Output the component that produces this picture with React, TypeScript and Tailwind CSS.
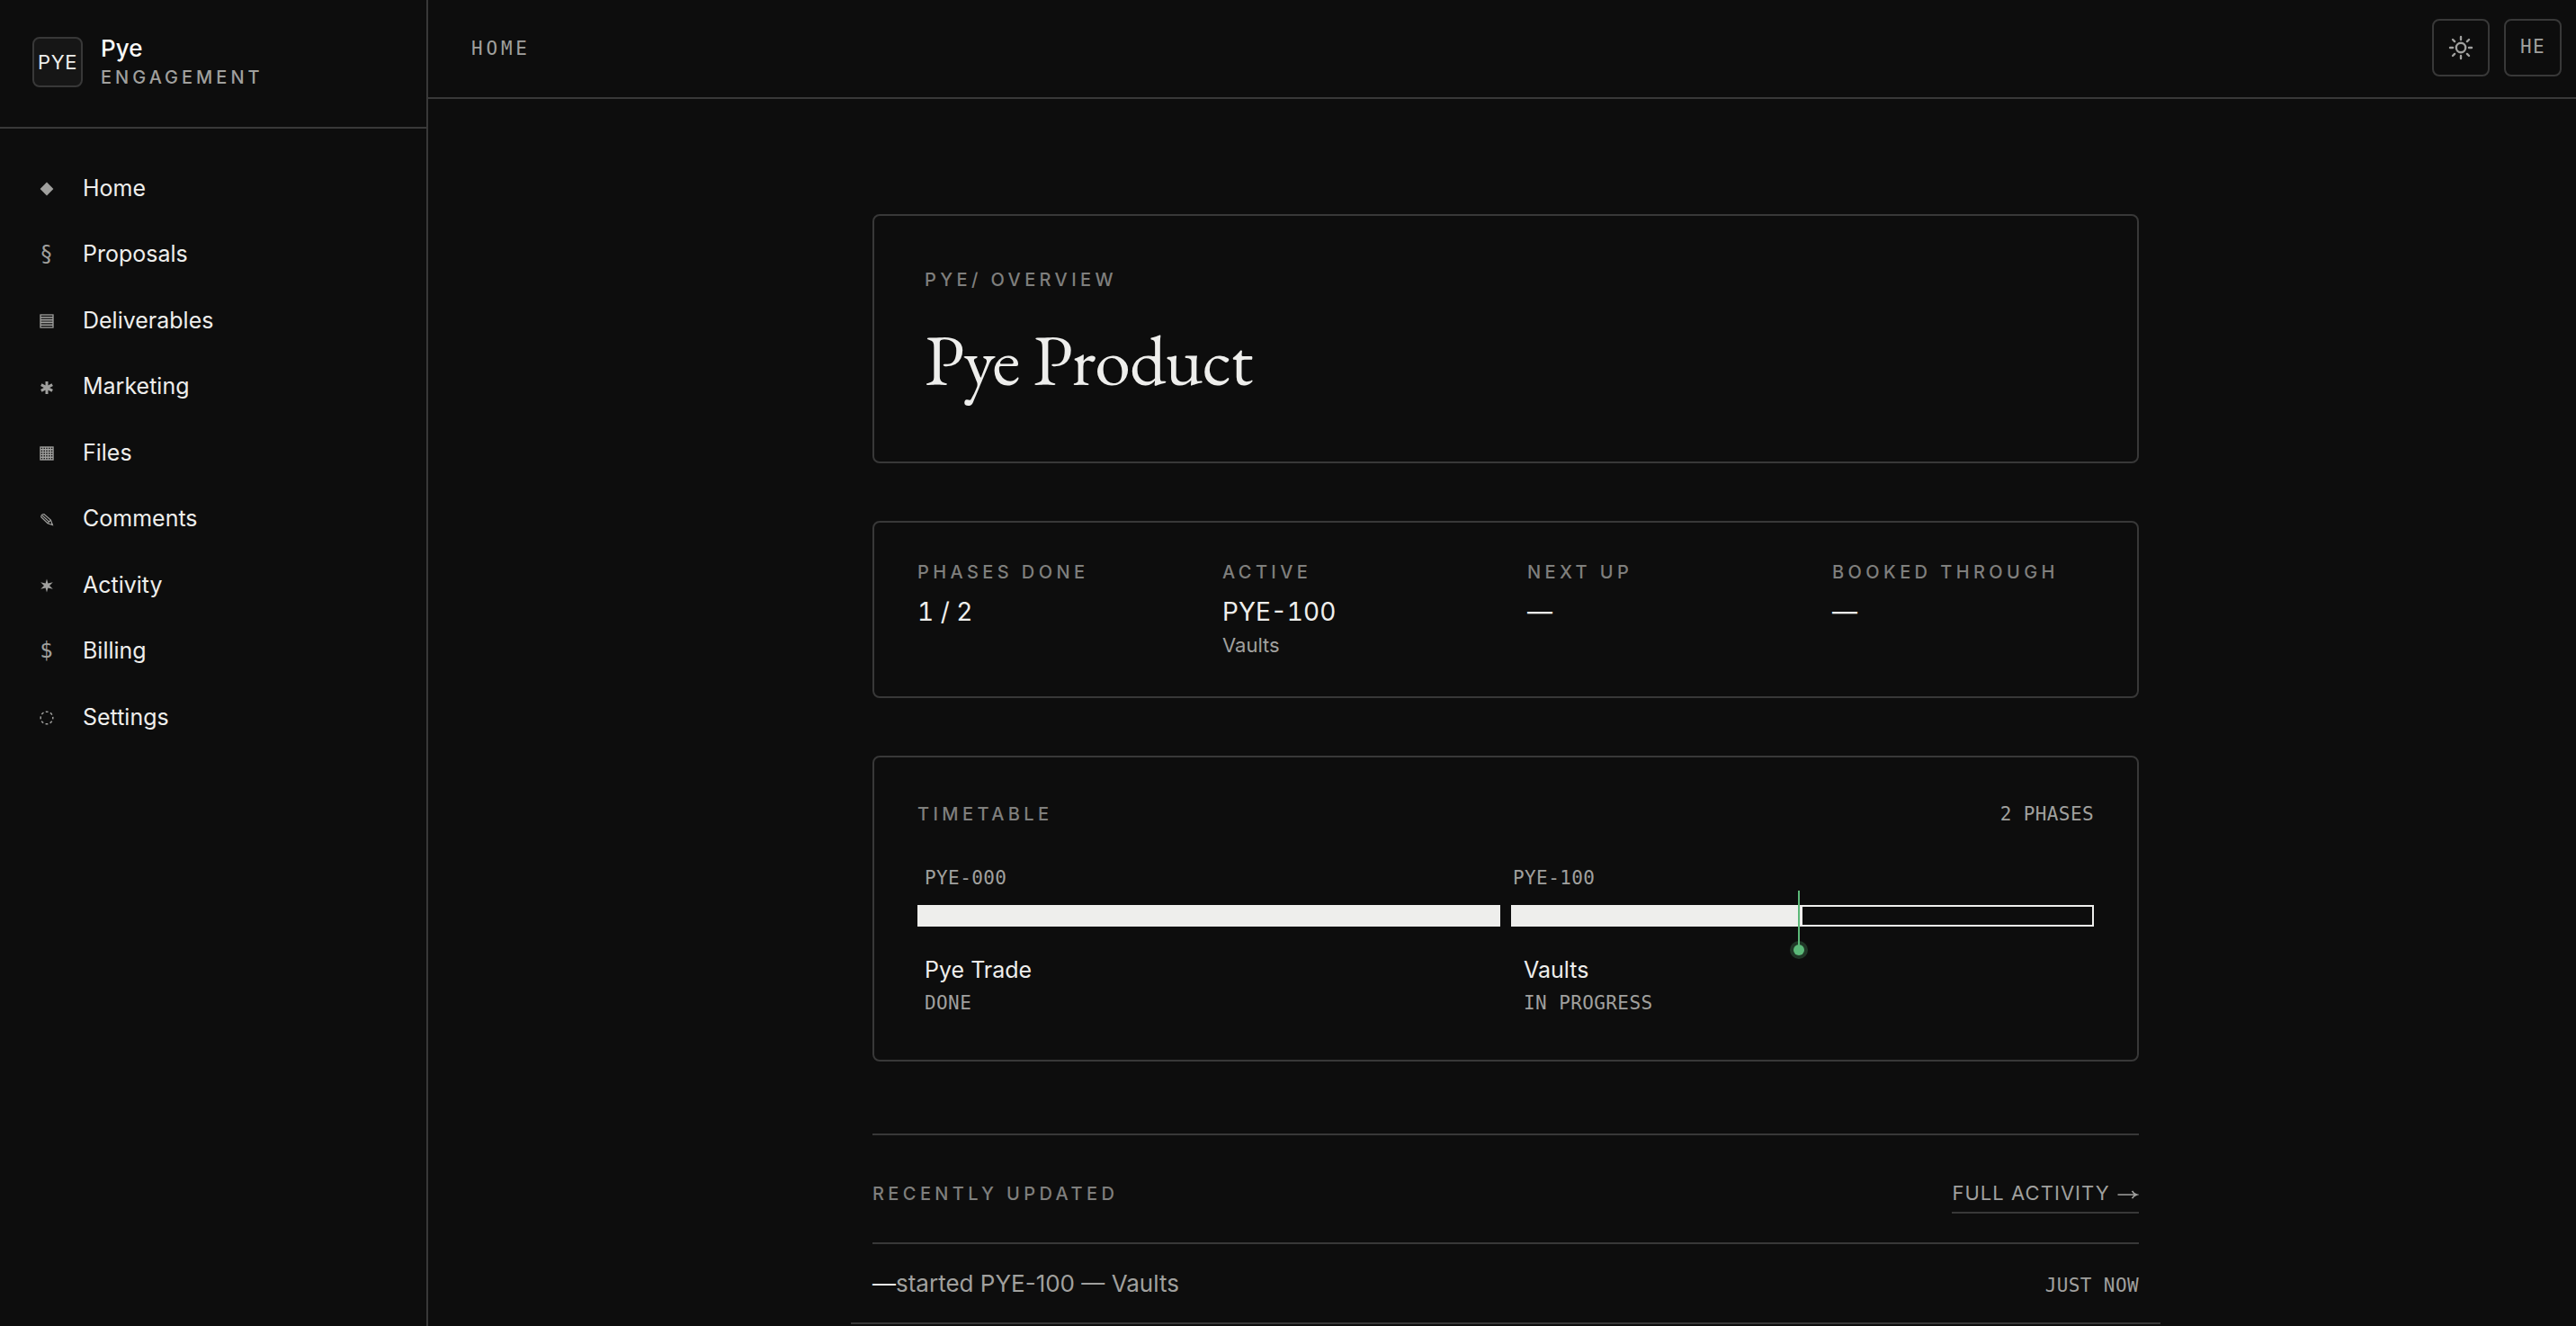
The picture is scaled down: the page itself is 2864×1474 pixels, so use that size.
import React from 'react';

interface NavItem {
  label: string;
  icon: React.ReactNode;
}

interface Stat {
  label: string;
  value: string;
  note?: string;
}

interface Phase {
  code: string;
  name: string;
  status: string;
  progress: number;
}

const Glyph: React.FC<{ children: React.ReactNode }> = ({ children }) => (
  <svg width="16" height="16" viewBox="0 0 16 16" fill="none" stroke="currentColor" className="mt-0.5">
    {children}
  </svg>
);

const navItems: NavItem[] = [
  { label: 'Home', icon: <Glyph><path d="M8 .6 15.4 8 8 15.4.6 8Z" fill="currentColor" stroke="none" /></Glyph> },
  { label: 'Proposals', icon: '§' },
  {
    label: 'Deliverables',
    icon: (
      <Glyph>
        <rect x="1" y="1" width="14" height="14" strokeWidth="1.3" />
        <path d="M1 3.8h14M1 6.6h14M1 9.4h14M1 12.2h14" strokeWidth="1.6" />
      </Glyph>
    ),
  },
  {
    label: 'Marketing',
    icon: (
      <Glyph>
        <path d="M8 1v14M1.8 4.6l12.4 6.8M1.8 11.4l12.4-6.8" strokeWidth="3" />
      </Glyph>
    ),
  },
  {
    label: 'Files',
    icon: (
      <Glyph>
        <rect x="1" y="1" width="14" height="14" strokeWidth="1.4" />
        <path d="M1 3.8h14M1 6.6h14M1 9.4h14M1 12.2h14M3.8 1v14M6.6 1v14M9.4 1v14M12.2 1v14" strokeWidth="1.4" />
      </Glyph>
    ),
  },
  {
    label: 'Comments',
    icon: (
      <Glyph>
        <path d="M1.8 4.700Q1.600 1.500 5 1.500L12.400 8.100 14.400 13.500 9 11.700ZM12.400 8.100 9 11.700M3.200 3.100l7.400 7" strokeWidth="1.2" />
      </Glyph>
    ),
  },
  {
    label: 'Activity',
    icon: (
      <Glyph>
        <path
          d="M8 .5 9.4 5.6 14.8 4.2 11 8 14.8 11.8 9.4 10.4 8 15.5 6.6 10.4 1.2 11.8 5 8 1.2 4.2 6.6 5.6Z"
          fill="currentColor"
          stroke="none"
        />
      </Glyph>
    ),
  },
  { label: 'Billing', icon: '$' },
  {
    label: 'Settings',
    icon: (
      <Glyph>
        <circle cx="8" cy="8" r="6.8" strokeWidth="1.5" strokeDasharray="2.9 2.44" strokeDashoffset="1.45" />
      </Glyph>
    ),
  },
];

const stats: Stat[] = [
  { label: 'Phases done', value: '1 / 2' },
  { label: 'Active', value: 'PYE-100', note: 'Vaults' },
  { label: 'Next up', value: '—' },
  { label: 'Booked through', value: '—' },
];

const phases: Phase[] = [
  { code: 'PYE-000', name: 'Pye Trade', status: 'Done', progress: 100 },
  { code: 'PYE-100', name: 'Vaults', status: 'In progress', progress: 50 },
];

const mono = "font-['DejaVu_Sans_Mono',monospace]";
const eyebrow = 'text-[20px] leading-[30px] font-medium uppercase tracking-[4.4px] text-[#7f7f7d]';
const monoNote = 'text-[21px] leading-[30px] uppercase tracking-[0.4px] text-[#a0a09e]';

const Sidebar = () => (
  <aside className="w-[476px] shrink-0 border-r-2 border-[#383838]">
    <div className="flex h-[143px] gap-5 border-b-2 border-[#383838] pt-[41px] pl-9">
      <div className="flex size-14 items-center justify-center rounded-lg border-2 border-[#383838] bg-[#161616] text-[22px] tracking-[0.6px]">
        PYE
      </div>
      <div className="-mt-[5px]">
        <div className="text-[26px] leading-[35px] font-medium text-[#fafaf8]">Pye</div>
        <div className="text-[20px] leading-[30px] font-medium tracking-[4px] text-[#a0a09e] uppercase">Engagement</div>
      </div>
    </div>
    <nav className="flex flex-col gap-1 px-5 pt-[31.5px]">
      {navItems.map(item => (
        <a key={item.label} className="flex items-center gap-6 px-4 py-4 text-[25px] leading-[37.5px]">
          <span className={`flex w-8 justify-center pr-px text-[24px] text-[#a0a09e] ${mono}`}>{item.icon}</span>
          {item.label}
        </a>
      ))}
    </nav>
  </aside>
);

const Topbar = () => (
  <header className="flex h-[110px] items-start justify-between border-b-2 border-[#383838] pt-[21px] pr-4 pl-12 text-[#a0a09e]">
    <span className={`text-[21px] leading-[66px] tracking-[3.8px] uppercase ${mono}`}>Home</span>
    <div className="flex gap-4">
      <button type="button" aria-label="Toggle theme" className="flex size-16 items-center justify-center rounded-lg border-2 border-[#383838]">
        <svg width="28" height="28" viewBox="-14 -14 28 28" fill="none" stroke="currentColor" strokeWidth="2.4" strokeLinecap="round">
          <circle r="5.2" />
          <path d="M0-9v-3M0 9v3M-9 0h-3M9 0h3M-6.9-6.9l-2.1-2.1M6.9 6.9l2.1 2.1M-6.9 6.9l-2.1 2.1M6.9-6.9l2.1-2.1" />
        </svg>
      </button>
      <button type="button" className={`size-16 rounded-lg border-2 border-[#383838] pb-px text-[21px] tracking-[1.4px] ${mono}`}>
        HE
      </button>
    </div>
  </header>
);

const Timetable = () => (
  <section className="mt-16 rounded-lg border-2 border-[#383838] p-12">
    <div className="flex justify-between">
      <h2 className={eyebrow}>Timetable</h2>
      <span className={`${monoNote} ${mono}`}>2 phases</span>
    </div>
    <div className="mt-[41px] grid grid-cols-2">
      {phases.map(p => (
        <span key={p.code} className={`px-2 ${monoNote} ${mono}`}>{p.code}</span>
      ))}
    </div>
    <div className="relative mt-[15px] grid grid-cols-2 gap-3">
      {phases.map(p => (
        <div key={p.code} className="h-6 border-2 border-[#eeeeec]">
          <div className="h-full bg-[#eeeeec]" style={{ width: `${p.progress}%` }} />
        </div>
      ))}
      {/* today marker */}
      <div className="absolute -top-4 left-[979px] h-[66px] w-0.5 bg-[#5bb878]">
        <div className="absolute -bottom-1.5 -left-[5px] size-3 rounded-full bg-[#5bb878] ring-4 ring-[#5bb878]/25" />
      </div>
    </div>
    <div className="mt-[31px] grid grid-cols-2 gap-6">
      {phases.map(p => (
        <div key={p.code} className="px-2">
          <div className="text-[25px] leading-[35px]">{p.name}</div>
          <div className={`mt-1 ${monoNote} ${mono}`}>{p.status}</div>
        </div>
      ))}
    </div>
  </section>
);

const RecentlyUpdated = () => (
  <section className="mt-20 border-t-2 border-[#383838] pt-12">
    <div className="flex items-baseline justify-between pb-8">
      <h2 className={eyebrow}>Recently updated</h2>
      <a className="border-b-2 border-[#383838] pb-1 text-[22px] leading-[33px] tracking-[1.05px] text-[#a0a09e] uppercase">
        Full activity{' '}
        <svg width="25" height="12" viewBox="0 0 25 12" fill="none" stroke="currentColor" strokeWidth="1.6" className="inline align-baseline">
          <path d="M1.500 6H22.500M17.500 1.800Q19 5 22.800 6 19 7 17.500 10.200" />
        </svg>
      </a>
    </div>
    <div className="border-t-2 border-[#383838]">
      <div className="-mx-6 flex items-baseline justify-between border-b-2 border-[#383838] px-6 py-6">
        <p className="text-[26px] leading-[39px] text-[#a0a09e]">
          <span className="text-[#eeeeec]">—</span>started PYE-100 — Vaults
        </p>
        <span className={`${monoNote} ${mono}`}>Just now</span>
      </div>
    </div>
  </section>
);

const App = () => {
  return (
    <div className="flex h-screen overflow-hidden bg-[#0d0d0d] font-['Inter',sans-serif] text-[#eeeeec]">
      <Sidebar />
      <div className="flex-1">
        <Topbar />
        <main className="pt-32 pl-2">
          <div className="mx-auto w-[1408px]">
            <section className="h-[277px] rounded-lg border-2 border-[#383838] px-14 pt-14">
              <div className={eyebrow}>Pye/ Overview</div>
              <h1 className="mt-[28px] font-['EB_Garamond','Liberation_Serif',serif] text-[80px] leading-[92px] tracking-[-1px]">
                Pye Product
              </h1>
            </section>
            <section className="mt-16 grid grid-cols-4 gap-12 rounded-lg border-2 border-[#383838] px-12 py-10">
              {stats.map(s => (
                <div key={s.label}>
                  <div className={eyebrow}>{s.label}</div>
                  <div className="mt-2 text-[28px] leading-[42px] tabular-nums">{s.value}</div>
                  {s.note && <div className="text-[22px] leading-[33px] text-[#a0a09e]">{s.note}</div>}
                </div>
              ))}
            </section>
            <Timetable />
            <RecentlyUpdated />
          </div>
        </main>
      </div>
    </div>
  );
};

export default App;
